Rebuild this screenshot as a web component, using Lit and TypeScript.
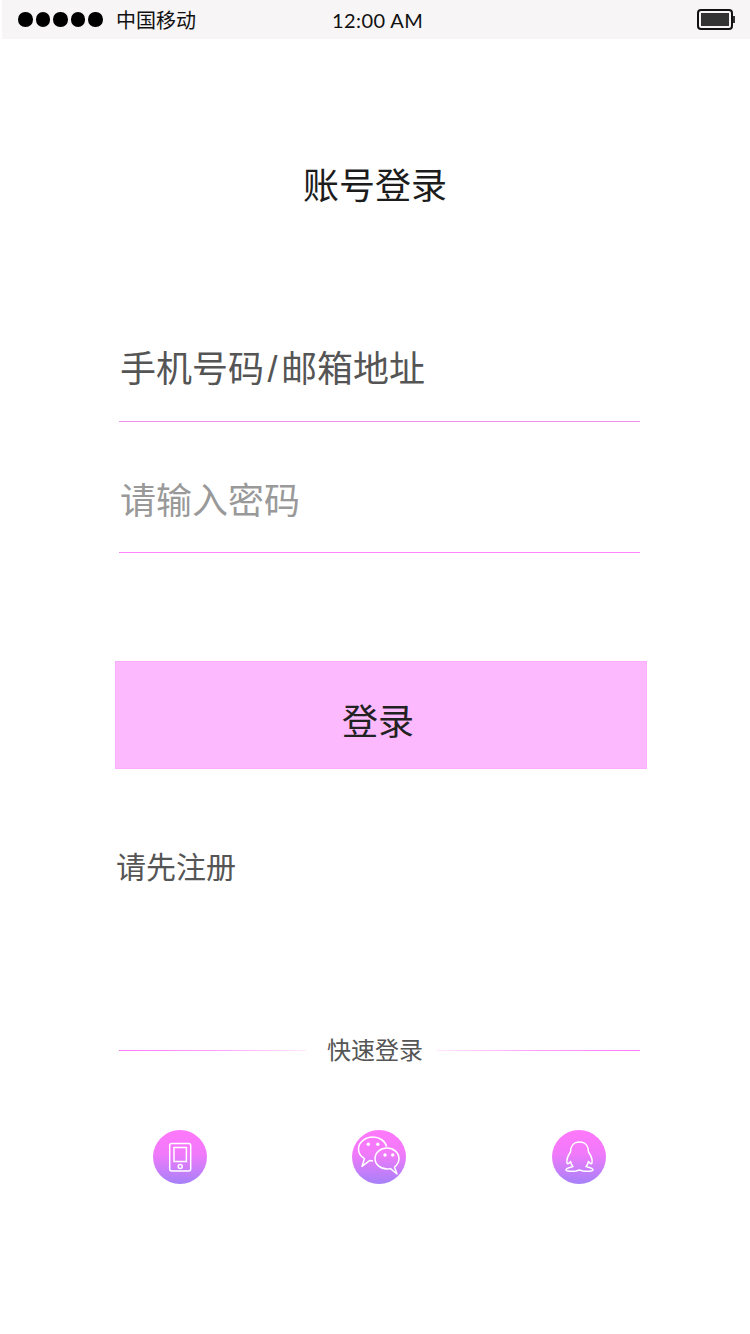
import { LitElement, css, html, svg } from "lit";
import { customElement } from "lit/decorators.js";

const gradient = (id: string) => svg`
  <defs>
    <linearGradient id=${id} x1="0" y1="0" x2="0" y2="1">
      <stop offset="0" stop-color="#ff78fb"></stop>
      <stop offset="0.45" stop-color="#f07afa"></stop>
      <stop offset="1" stop-color="#a681f8"></stop>
    </linearGradient>
  </defs>
  <circle cx="27" cy="27" r="27" fill="url(#${id})"></circle>
`;

const phoneIcon = html`<svg viewBox="0 0 54 54" width="54" height="54">
  ${gradient("g-phone")}
  <g fill="none" stroke="#fff" stroke-width="1.5">
    <rect x="16.7" y="13.6" width="21" height="27.4" rx="2"></rect>
    <rect x="21" y="17.5" width="12.4" height="14"></rect>
    <circle cx="27.2" cy="36.6" r="2"></circle>
  </g>
</svg>`;

const wechatIcon = html`<svg viewBox="0 0 54 54" width="54" height="54">
  ${gradient("g-wechat")}
  <g fill="none" stroke="#fff" stroke-width="1.5" stroke-linejoin="round">
    <path d="M34.6 16.5C33 10.5 27 7 21 7 13 7 6.5 12.5 6.5 19c0 4 2.2 7.5 6 9.6L10 36.4l7.5-5.8c1 .2 2 .4 3.5.4"></path>
    <path d="M35 18c6.6 0 12 4.7 12 10.5 0 3.5-2 6.5-4.5 8.5l2.5 7-6.5-5.4c-1 .3-2.5 .4-3.5 .4-6.6 0-12-4.7-12-10.5S28.4 18 35 18Z"></path>
  </g>
  <g fill="#fff">
    <circle cx="16.3" cy="14.3" r="1.7"></circle>
    <circle cx="25.8" cy="14.3" r="1.7"></circle>
    <circle cx="33" cy="25" r="1.7"></circle>
    <circle cx="40.7" cy="25" r="1.7"></circle>
  </g>
</svg>`;

const qqIcon = html`<svg viewBox="0 0 54 54" width="54" height="54">
  ${gradient("g-qq")}
  <path
    fill="none"
    stroke="#fff"
    stroke-width="1.5"
    stroke-linejoin="round"
    d="M27.5 12C21 12 18.5 17 18.5 22 16 25.5 14.5 30 15 33c1 1.5 2.5 0 3.5-1.5.5 2 1 3.5 2.5 5-2.5 1-7 1.5-7 3.5 0 1.5 7 1.5 10 1l3.5-1 3.5 1c3 .5 10 .5 10-1 0-2-4.5-2.5-7-3.5 1.5-1.5 2-3 2.500-5 1 1.500 2.500 3 3.500 1.500.5-3-1-7.500-3.500-11C36.500 17 34 12 27.500 12Z"
  ></path>
</svg>`;

@customElement("app-root")
export class AppRoot extends LitElement {
  static styles = css`
    :host {
      display: block;
      width: 750px;
      height: 1334px;
      background: #fff;
      font-family: "Liberation Sans", "Noto Sans CJK SC", sans-serif;
      overflow: hidden;
    }
    .status {
      display: flex;
      align-items: center;
      height: 39px;
      margin-left: 2px;
      padding: 0 15px 0 16px;
      background: #f7f5f6;
      color: #111;
      font-size: 20px;
    }
    .dots {
      display: flex;
      gap: 3px;
      width: 98px;
    }
    .dots i {
      width: 14.5px;
      height: 14.5px;
      border-radius: 50%;
      background: #000;
    }
    .time {
      margin-left: 136px;
      font-family: Lato, sans-serif;
      font-size: 20px;
      letter-spacing: 0.4px;
    }
    .battery {
      display: flex;
      align-items: center;
      margin-left: auto;
    }
    .battery .shell {
      box-sizing: border-box;
      width: 36px;
      height: 21px;
      padding: 2px;
      border: 2px solid #111;
      border-radius: 4px;
    }
    .battery .level {
      height: 100%;
      background: #333;
    }
    .battery .nub {
      width: 2px;
      height: 7px;
      background: #333;
    }
    h1 {
      margin: 126px 0 0;
      font-size: 36px;
      font-weight: 400;
      line-height: 44px;
      text-align: center;
      color: #1c1c1c;
    }
    .form {
      display: flex;
      flex-direction: column;
      width: 521px;
      margin: 120px 0 0 119px;
    }
    .field {
      box-sizing: border-box;
      padding-left: 1px;
      font-size: 36px;
      line-height: 44px;
    }
    .field.user {
      height: 93px;
      padding-top: 19px;
      color: #555;
      border-bottom: 1px solid #ee90ee;
    }
    .field.user .slash {
      margin: 0 3.5px;
    }
    .field.pass {
      height: 131px;
      padding-top: 58px;
      color: #999;
      border-bottom: 1px solid #ff85ff;
    }
    .submit {
      display: block;
      box-sizing: border-box;
      width: 532px;
      height: 108px;
      margin: 108px 0 0 115px;
      padding: 8px 6px 0 0;
      border: 1px solid #fcaefd;
      background: #fcb9fd;
      color: #222;
      font: inherit;
      font-size: 36px;
      text-align: center;
    }
    .register {
      margin: 80px 0 0 116px;
      font-size: 30px;
      line-height: 38px;
      color: #555;
    }
    .quick {
      display: flex;
      align-items: center;
      width: 521px;
      height: 30px;
      margin: 148px 0 0 119px;
      font-size: 24px;
      color: #555;
    }
    .quick span {
      box-sizing: border-box;
      width: 131px;
      margin-bottom: 4px;
      padding-left: 7px;
      text-align: center;
    }
    .quick i {
      height: 1px;
    }
    .quick i.left {
      width: 187px;
      background: linear-gradient(90deg, #ff78fb, #ff9cfc 50%, #ffe6ff);
    }
    .quick i.right {
      flex: 1;
      background: linear-gradient(90deg, #ffe6ff, #ff9cfc 50%, #ff78fb);
    }
    .socials {
      display: flex;
      gap: 145px;
      margin: 65px 0 0 153px;
    }
    .socials svg {
      display: block;
    }
    .socials svg:last-child {
      margin-left: 1px;
    }
  `;

  render() {
    return html`
      <div class="status">
        <div class="dots"><i></i><i></i><i></i><i></i><i></i></div>
        <span>中国移动</span>
        <span class="time">12:00 AM</span>
        <div class="battery">
          <div class="shell"><div class="level"></div></div>
          <div class="nub"></div>
        </div>
      </div>
      <h1>账号登录</h1>
      <div class="form">
        <div class="field user">手机号码<span class="slash">/</span>邮箱地址</div>
        <div class="field pass">请输入密码</div>
      </div>
      <button class="submit">登录</button>
      <div class="register">请先注册</div>
      <div class="quick">
        <i class="left"></i>
        <span>快速登录</span>
        <i class="right"></i>
      </div>
      <div class="socials">${phoneIcon}${wechatIcon}${qqIcon}</div>
    `;
  }
}
